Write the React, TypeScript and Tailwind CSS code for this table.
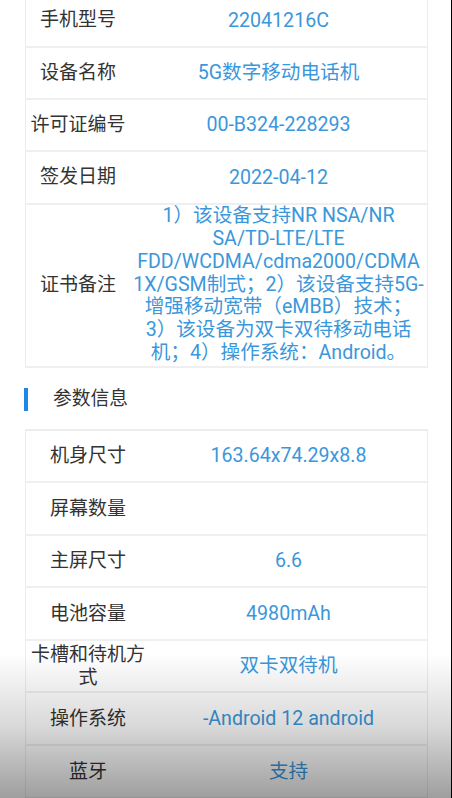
const basic = [
  { label: "手机型号", value: "22041216C" },
  { label: "设备名称", value: "5G数字移动电话机" },
  { label: "许可证编号", value: "00-B324-228293" },
  { label: "签发日期", value: "2022-04-12" },
];

const noteLines = [
  "1）该设备支持NR NSA/NR",
  "SA/TD-LTE/LTE",
  "FDD/WCDMA/cdma2000/CDMA",
  "1X/GSM制式；2）该设备支持5G-",
  "增强移动宽带（eMBB）技术；",
  "3）该设备为双卡双待移动电话",
  "机；4）操作系统：Android。",
];

const params = [
  { label: "机身尺寸", value: "163.64x74.29x8.8" },
  { label: "屏幕数量", value: "" },
  { label: "主屏尺寸", value: "6.6" },
  { label: "电池容量", value: "4980mAh" },
  { label: "卡槽和待机方式", value: "双卡双待机" },
  { label: "操作系统", value: "-Android 12 android" },
  { label: "蓝牙", value: "支持" },
];

const font = { fontFamily: '"Roboto", "Noto Sans CJK SC", sans-serif' };

export default function App() {
  return (
    <div
      className="relative h-[798px] w-[452px] overflow-hidden bg-white"
      style={font}
    >
      <div className="absolute right-0 top-0 h-full w-[1.5px] bg-black" />

      <div className="-mt-[4.5px] ml-[25px] w-[403px]">
        {/* 基本信息 */}
        <div className="border-x-[1.5px] border-[#ececec]">
          {basic.map((row) => (
            <div
              key={row.label}
              className="flex h-[52.25px] items-center border-b-2 border-[#efefef]"
            >
              <div className="w-[104px] text-center text-[19px] text-[#333333]">
                {row.label}
              </div>
              <div className="flex-1 text-center text-[19.6px] text-[#3b97db]">
                {row.value}
              </div>
            </div>
          ))}
          <div className="flex h-[163px] items-center border-b-2 border-[#efefef]">
            <div className="w-[104px] text-center text-[19px] text-[#333333]">
              证书备注
            </div>
            <div className="flex-1 text-center text-[19.6px] leading-[22.8px] text-[#3b97db]">
              {noteLines.map((line) => (
                <div key={line} className="whitespace-nowrap">
                  {line}
                </div>
              ))}
            </div>
          </div>
        </div>

        {/* section title */}
        <div className="-ml-[1px] flex h-[61px] items-center pt-[2px]">
          <span className="h-[23px] w-[4px] bg-[#1e88e5]" />
          <span className="ml-[25px] text-[18.8px] text-[#333333]">
            参数信息
          </span>
        </div>

        {/* 参数信息 */}
        <div className="border-x-[1.5px] border-t-2 border-[#ececec]">
          {params.map((row) => (
            <div
              key={row.label}
              className="flex h-[52.6px] items-center border-b-2 border-[#efefef]"
            >
              <div className="w-[124px] px-[4px] text-center text-[19px] leading-[23px] text-[#333333]">
                {row.label}
              </div>
              <div className="flex-1 text-center text-[19.6px] text-[#3b97db]">
                {row.value}
              </div>
            </div>
          ))}
        </div>
      </div>

      <div className="pointer-events-none absolute bottom-0 left-0 h-[145px] w-full bg-gradient-to-b from-transparent via-[rgba(0,0,0,0.15)] to-[rgba(0,0,0,0.38)]" />
    </div>
  );
}
